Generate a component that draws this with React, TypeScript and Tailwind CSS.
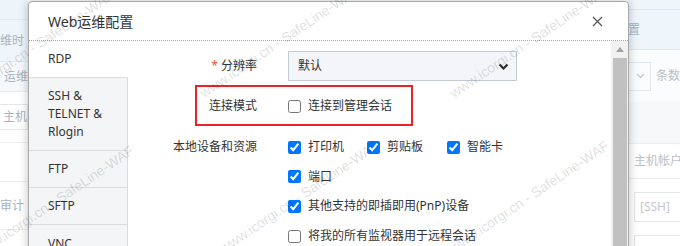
import React from "react";

const WM = "www.icorgi.cn - SafeLine-WAF";

function Watermark({ x, y }: { x: number; y: number }) {
  return (
    <span
      className="pointer-events-none absolute origin-bottom-left -rotate-[34deg] whitespace-nowrap font-['Liberation_Sans',sans-serif] text-[14px] leading-[14px] text-[rgba(0,0,0,0.14)]"
      style={{ left: x, top: y - 14 }}
    >
      {WM}
    </span>
  );
}

function Check({ checked, label, w }: { checked?: boolean; label: string; w?: string }) {
  return (
    <label className={`flex items-center gap-[7px] ${w ?? ""}`}>
      <input type="checkbox" defaultChecked={checked} className="m-0 h-[13px] w-[13px] shrink-0" />
      <span>{label}</span>
    </label>
  );
}

export default function App() {
  return (
    <div className="relative h-[246px] w-[680px] overflow-hidden bg-white font-['Noto_Sans','Noto_Sans_CJK_SC',sans-serif] text-[12px] text-[#333]">
      {/* page behind the dialog */}
      <div className="flex h-full">
        <div className="flex w-[28px] flex-col text-[#aab3ba]">
          <div className="h-[20px] border-b border-[#e2ebf0] bg-[#edf5fa]" />
          <div className="flex h-[42px] items-center border-b border-[#e2ebf0] bg-[#eef6fb] pl-[0px]">维时</div>
          <div className="flex h-[30px] items-center justify-end overflow-hidden whitespace-nowrap border-b border-[#e6ecf0] bg-[#f6f9fb]">运维</div>
          <div className="flex h-[51px] flex-col justify-center border-b border-[#eceff2]">
            <div className="flex h-[26px] items-center justify-end overflow-hidden whitespace-nowrap border-y border-r border-[#e4e8ec]">主机</div>
          </div>
          <div className="h-[39px] border-b border-[#eceff2]" />
          <div className="flex h-[48px] items-center border-b border-[#eceff2]">审计</div>
          <div className="flex-1" />
        </div>
        <div className="flex-1" />
        <div className="flex w-[52px] flex-col text-[#b9c0c6]">
          <div className="h-[10px] border-b border-[#dde8ee] bg-[#eef6fa]" />
          <div className="flex h-[40px] items-center border-b border-[#e0eaf0] bg-[#eef6fb] text-[#a7b8c6]">置</div>
          <div className="flex h-[52px] items-center gap-[5px] bg-[#fbfcfd]">
            <div className="flex h-[29px] w-[29px] items-center justify-end border border-[#e3e6ea] pr-[5px]">
              <svg width="9" height="6" viewBox="0 0 9 6">
                <path d="M1 1 L4.5 4.5 L8 1" fill="none" stroke="#c4c8cc" strokeWidth="1.2" />
              </svg>
            </div>
            <span className="whitespace-nowrap">条数</span>
          </div>
          <div className="h-[42px] border-b border-[#eceff2] bg-[#f7f8f9]" />
          <div className="flex h-[35px] items-center whitespace-nowrap border-b border-[#eceff2] pl-[6px]">主机帐户</div>
          <div className="flex h-[56px] items-center pl-[6px]">
            <div className="flex h-[30px] flex-1 items-center border-y border-l border-[#e4e7ea] pl-[5px] text-[#c4c8cc]">[SSH]</div>
          </div>
          <div className="ml-[6px] flex-1 border-l border-t border-[#e4e7ea]" />
        </div>
      </div>

      {/* dialog */}
      <div className="absolute left-[28px] top-[1px] flex h-[300px] w-[601px] flex-col rounded-[4px] border border-[#a9a9a9] bg-white shadow-[0_0_10px_rgba(0,0,0,0.25)]">
        <div className="flex h-[39px] items-center justify-between border-b border-dotted border-[#aaa] pl-[19px] pr-[25px]">
          <span className="text-[14px]">Web运维配置</span>
          <svg width="11" height="11" viewBox="0 0 11 11">
            <path d="M1 1 L10 10 M10 1 L1 10" stroke="#555" strokeWidth="1.2" />
          </svg>
        </div>
        <div className="flex flex-1">
          {/* tabs */}
          <div className="flex w-[99px] flex-col bg-[#f4f5f7]">
            <div className="flex h-[37px] items-center border-b border-[#dcdcdc] bg-white pl-[19px]">RDP</div>
            <div className="border-b border-r border-[#dcdcdc] py-[9px] pl-[19px] leading-[18px]">
              SSH &amp;
              <br />
              TELNET &amp;
              <br />
              Rlogin
            </div>
            <div className="flex h-[37px] items-center border-b border-r border-[#dcdcdc] pl-[19px]">FTP</div>
            <div className="flex h-[37px] items-center border-b border-r border-[#dcdcdc] pl-[19px]">SFTP</div>
            <div className="flex h-[37px] items-center border-r border-[#dcdcdc] pl-[19px]">VNC</div>
            <div className="flex-1 border-r border-[#dcdcdc]" />
          </div>
          {/* form */}
          <div className="flex flex-1 flex-col pt-[10px]">
            <div className="flex h-[30px] items-center">
              <div className="w-[129px] text-right">
                <span className="text-[#e8553a]">*</span> 分辨率
              </div>
              <div className="ml-[31px] flex h-[30px] w-[229px] items-center justify-between border border-[#c5cbd5] bg-[#f3f5f9] pl-[9px] pr-[7px]">
                <span>默认</span>
                <svg width="11" height="7" viewBox="0 0 11 7">
                  <path d="M1.5 1.5 L5.5 5.5 L9.5 1.5" fill="none" stroke="#333" strokeWidth="2.2" />
                </svg>
              </div>
            </div>
            <div className="mt-[10px] flex h-[30px] items-center">
              <div className="w-[129px] text-right">连接模式</div>
              <div className="ml-[31px]">
                <Check label="连接到管理会话" />
              </div>
            </div>
            <div className="mt-[11px] flex">
              <div className="flex h-[30px] w-[129px] items-center justify-end">本地设备和资源</div>
              <div className="ml-[31px] flex flex-col">
                <div className="flex h-[30px] items-center">
                  <Check checked label="打印机" w="w-[79px]" />
                  <Check checked label="剪贴板" w="w-[80px]" />
                  <Check checked label="智能卡" />
                </div>
                <div className="flex h-[29px] items-center">
                  <Check checked label="端口" />
                </div>
                <div className="flex h-[30px] items-center">
                  <Check checked label="其他支持的即插即用(PnP)设备" />
                </div>
                <div className="flex h-[30px] items-center">
                  <Check label="将我的所有监视器用于远程会话" />
                </div>
              </div>
            </div>
          </div>
          {/* scrollbar */}
          <div className="flex w-[17px] flex-col bg-[#f1f1f1]">
            <div className="flex h-[17px] items-center justify-center">
              <svg width="8" height="5" viewBox="0 0 8 5">
                <path d="M0 5 L4 0 L8 5 Z" fill="#a3a3a3" />
              </svg>
            </div>
            <div className="ml-[2px] mr-[1px] flex-1 bg-[#c1c1c1]" />
          </div>
        </div>
      </div>

      {/* annotation */}
      <div className="pointer-events-none absolute left-[195px] top-[85px] h-[41px] w-[218px] border-2 border-[#eb2226]" />

      {/* watermarks */}
      <Watermark x={-40} y={105} />
      <Watermark x={205} y={100} />
      <Watermark x={455} y={100} />
      <Watermark x={-20} y={260} />
      <Watermark x={225} y={255} />
      <Watermark x={455} y={255} />
    </div>
  );
}
